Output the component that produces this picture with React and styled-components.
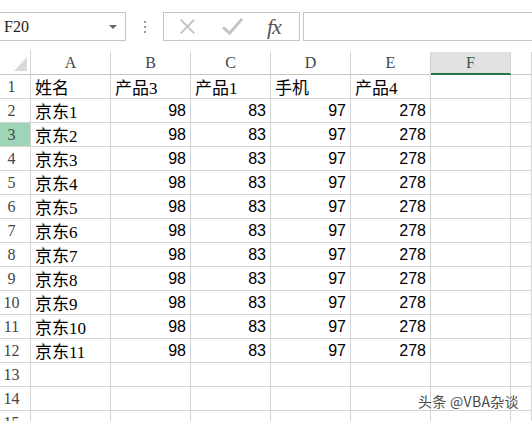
import styled, { createGlobalStyle } from 'styled-components';

const GlobalStyle = createGlobalStyle`
    html, body {
        margin: 0;
        padding: 0;
        background: #FFFFFF;
        overflow: hidden;
    }
    * {
        box-sizing: border-box;
    }
`;

const COLUMNS = ['A', 'B', 'C', 'D', 'E', 'F', ''];
const SELECTED_COL = 'F';
const SELECTED_ROW = 3;

const rows = [
    ['姓名', '产品3', '产品1', '手机', '产品4'],
    ...Array.from({ length: 11 }, (_, i) => [`京东${i + 1}`, 98, 83, 97, 278]),
    [], [], [],
];

export default function App() {
    return (
        <Page>
            <GlobalStyle />
            <FormulaBar>
                <NameBox>
                    F20
                    <DropArrow />
                </NameBox>
                <Grip>
                    <span /><span /><span />
                </Grip>
                <ActionBox>
                    <CancelIcon viewBox="0 0 20 20">
                        <path d="M2 2 L18 18 M18 2 L2 18" />
                    </CancelIcon>
                    <CheckIcon viewBox="0 0 24 20">
                        <path d="M2 11 L9 17 L22 2" />
                    </CheckIcon>
                    <Fx>fx</Fx>
                </ActionBox>
                <FormulaInput />
            </FormulaBar>
            <Sheet>
                <Corner>
                    <Triangle />
                </Corner>
                {COLUMNS.map((c, i) => (
                    <ColHeader key={i} selected={c === SELECTED_COL}>{c}</ColHeader>
                ))}
                {rows.map((r, ri) => (
                    <Row key={ri} cells={r} index={ri + 1} />
                ))}
            </Sheet>
            <Watermark>头条 @VBA杂谈</Watermark>
        </Page>
    );
}

function Row({ cells, index }) {
    return (
        <>
            <RowHeader selected={index === SELECTED_ROW}>{index}</RowHeader>
            {COLUMNS.map((_, ci) => {
                const v = cells[ci];
                const isNum = typeof v === 'number';
                return (
                    <Cell key={ci} numeric={isNum}>{v}</Cell>
                );
            })}
        </>
    );
}

const Page = styled.div`
    width: 532px;
    height: 421px;
    position: relative;
    overflow: hidden;
`;

const FormulaBar = styled.div`
    height: 50px;
    padding: 12px 0 9px;
    display: flex;
    align-items: stretch;
`;

const NameBox = styled.div`
    width: 126px;
    border: 1px solid #C6C6C6;
    border-left: none;
    padding-left: 4px;
    display: flex;
    align-items: center;
    justify-content: space-between;
    padding-right: 8px;
    font-family: "Liberation Serif", serif;
    font-size: 16px;
    color: #222222;
`;

const DropArrow = styled.span`
    width: 0;
    height: 0;
    border-left: 4px solid transparent;
    border-right: 4px solid transparent;
    border-top: 4px solid #666666;
`;

const Grip = styled.div`
    width: 37px;
    display: flex;
    flex-direction: column;
    align-items: center;
    justify-content: center;
    gap: 3px;

    span {
        width: 2px;
        height: 2px;
        background: #9A9A9A;
    }
`;

const ActionBox = styled.div`
    width: 137px;
    border: 1px solid #C6C6C6;
    display: flex;
    align-items: center;
    padding-left: 15px;
`;

const CancelIcon = styled.svg`
    width: 17px;
    height: 17px;
    fill: none;
    stroke: #C3C3C3;
    stroke-width: 2.2;
`;

const CheckIcon = styled.svg`
    width: 23px;
    height: 19px;
    margin-left: 25px;
    fill: none;
    stroke: #C3C3C3;
    stroke-width: 3;
`;

const Fx = styled.span`
    margin-left: 23px;
    font-family: "Liberation Serif", serif;
    font-style: italic;
    font-size: 22px;
    color: #555555;
    letter-spacing: -1px;
`;

const FormulaInput = styled.div`
    flex: 1;
    margin-left: 3px;
    border: 1px solid #C6C6C6;
    border-right: none;
`;

const Sheet = styled.div`
    display: grid;
    grid-template-columns: 31px repeat(6, 80px) 1fr;
    grid-template-rows: 25px;
    grid-auto-rows: 24px;
`;

const Corner = styled.div`
    border-right: 1px solid #D4D4D4;
    border-bottom: 1px solid #C6C6C6;
    position: relative;
`;

const Triangle = styled.div`
    position: absolute;
    right: 3px;
    bottom: 3px;
    width: 0;
    height: 0;
    border-left: 13px solid transparent;
    border-bottom: 14px solid #DADADA;
`;

const ColHeader = styled.div`
    display: flex;
    align-items: center;
    justify-content: center;
    margin-top: 2px;
    border-right: 1px solid #D4D4D4;
    border-bottom: ${p => p.selected ? '2px solid #217346' : '1px solid #C6C6C6'};
    background: ${p => p.selected ? '#E1E1E1' : '#FFFFFF'};
    color: ${p => p.selected ? '#2F5E45' : '#444444'};
    font-family: "Liberation Serif", serif;
    font-size: 16px;
`;

const RowHeader = styled.div`
    display: flex;
    align-items: center;
    justify-content: center;
    padding-right: 7px;
    border-right: 1px solid #D4D4D4;
    border-bottom: 1px solid #D4D4D4;
    background: ${p => p.selected ? '#9FD5B7' : '#FFFFFF'};
    color: #444444;
    font-family: "Liberation Serif", serif;
    font-size: 16px;
`;

const Cell = styled.div`
    display: flex;
    align-items: center;
    justify-content: ${p => p.numeric ? 'flex-end' : 'flex-start'};
    padding: 0 4px 0 4px;
    border-right: 1px solid #D4D4D4;
    border-bottom: 1px solid #D4D4D4;
    color: #000000;
    font-family: ${p => p.numeric
        ? '"Liberation Sans", Arial, sans-serif'
        : '"Liberation Serif", "Noto Sans CJK SC", serif'};
    font-size: ${p => p.numeric ? '16px' : '17px'};
    white-space: nowrap;
`;

const Watermark = styled.div`
    position: absolute;
    left: 418px;
    top: 391px;
    font-family: "Noto Sans CJK SC", "Liberation Sans", sans-serif;
    font-size: 14px;
    letter-spacing: 0.3px;
    color: #4A4A4A;
    text-shadow: 0 0 2px #FFFFFF;
`;
